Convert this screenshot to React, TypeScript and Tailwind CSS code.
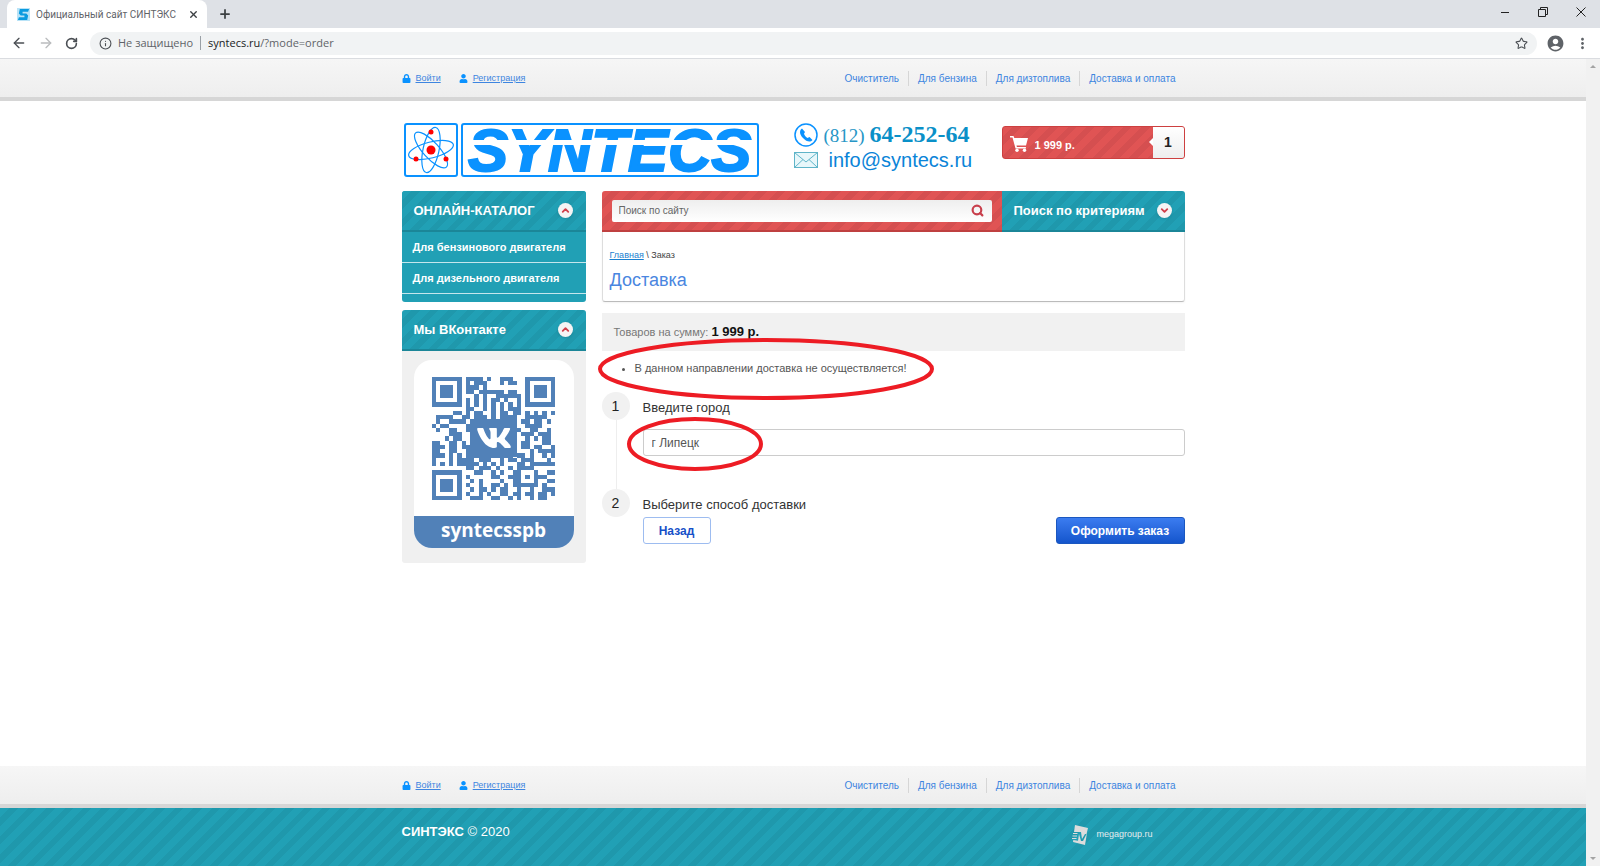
import { ArrowLeft, ArrowRight, ChevronDown, ChevronUp, Info, Plus, RotateCw, Search, Star, X } from 'lucide-react';
import { FaLock, FaShoppingCart, FaUser, FaVk } from 'react-icons/fa';
import { MdAccountCircle, MdMoreVert } from 'react-icons/md';

const tealStripes =
    'bg-[repeating-linear-gradient(135deg,#21a0b5_0px,#21a0b5_7px,#1f98ac_7px,#1f98ac_13px)]';
const redStripes =
    'bg-[repeating-linear-gradient(135deg,#e05454_0px,#e05454_7px,#d54f50_7px,#d54f50_13px)]';

const navLinks = ['Очиститель', 'Для бензина', 'Для дизтоплива', 'Доставка и оплата'];
const catalog = ['Для бензинового двигателя', 'Для дизельного двигателя'];

const qrRows = [
    '#######.####.#..###...#######',
    '#.....#.#.###...#.##..#.....#',
    '#.###.#.###.#.........#.###.#',
    '#.###.#.##.######.##..#.###.#',
    '#.###.#...#.#..######.#.###.#',
    '#.....#.#.#.#.##.#..#.#.....#',
    '#######.#.#.#.#.#.#.#.#######',
    '........##..#.#.#.###........',
    '.....##.#.##..#.##.##.#.#.#.#',
    '.####..##.###.#.####..#####..',
    '.#..####.###########.##.##.#.',
    '#.##....############..####...',
    '.#..##..#########.###..##..#.',
    '....###..###########.###.###.',
    '...#.##..###########..#.#.##.',
    '##..##.#.###########.##...##.',
    '###.##.####.########.##.##..#',
    '##..##..#..#########...#.####',
    '###.#.#.###########.##.#..#.#',
    '#...#.####.###..#.##.###...#.',
    '#.#.#.#####.#.#.#...##.######',
    '........##.###.#..#.####.....',
    '#######...##..#.#..##...#..##',
    '#.....#.#.....##..###.#.###..',
    '#.###.#..#.#....#..##...#..##',
    '#.###.#.#..#..##.#.######.#..',
    '#.###.#..#.##.#.##..#..#..###',
    '#.....#.#..#.#..##.##.##.##.#',
    '#######..###..##..#.#..#.##..',
];

function QrCode() {
    return (
        <svg viewBox="0 0 29 29" className="size-[123px]" shapeRendering="crispEdges" fill="#5181b8">
            {qrRows.map((row, y) =>
                row.split('').map((cell, x) => cell === '#' && (
                    <rect key={`${x}-${y}`} x={x} y={y} width="1" height="1" />
                ))
            )}
        </svg>
    );
}

function Browser() {
    return (
        <header className="font-['Open_Sans',sans-serif] text-[11px] text-[#5f6368]">
            <div className="flex h-7 items-center bg-[#dee1e6]">
                <div className="ml-[7px] flex h-full w-[200px] items-center rounded-t-lg bg-white pr-2 pl-[10px]">
                    <svg viewBox="0 0 14 14" className="size-[13px] shrink-0">
                        <rect width="14" height="14" fill="#b9e3f7" />
                        <path d="M3 1h10l-1 3H6v2h4l2 2-1 5H1l1-3h6V8H4L2 6z" fill="#0a9be0" />
                    </svg>
                    <span className="ml-[6px] flex-1 font-[Roboto,sans-serif] text-[10px] whitespace-nowrap">Официальный сайт СИНТЭКС</span>
                    <button aria-label="Закрыть вкладку"><X size={11} strokeWidth={3} className="text-[#3c4043]" /></button>
                </div>
                <button aria-label="Новая вкладка" className="ml-[11px]"><Plus size={14} strokeWidth={3} className="text-[#3c4043]" /></button>
                <div className="mr-[14px] mb-1 ml-auto flex items-center gap-7 text-[#222]">
                    <button aria-label="Свернуть">
                        <svg viewBox="0 0 10 10" className="size-[10px]"><path d="M1 5.500h8" stroke="currentColor" /></svg>
                    </button>
                    <button aria-label="Восстановить">
                        <svg viewBox="0 0 10 10" className="size-[10px]" fill="none" stroke="currentColor">
                            <path d="M.5 2.500h7v7h-7zM2.500 2.500v-2h7v7h-2" />
                        </svg>
                    </button>
                    <button aria-label="Закрыть">
                        <svg viewBox="0 0 10 10" className="size-[10px]"><path d="M.5.5l9 9M9.500.5l-9 9" stroke="currentColor" /></svg>
                    </button>
                </div>
            </div>
            <div className="flex h-[31px] items-center border-b border-[#dadce0] bg-white pl-[11px]">
                <button aria-label="Назад"><ArrowLeft size={16} className="text-[#4b4f54]" /></button>
                <button aria-label="Вперёд" className="ml-[11px]"><ArrowRight size={16} className="text-[#babcbe]" /></button>
                <button aria-label="Обновить" className="ml-[11px]"><RotateCw size={13} strokeWidth={3} className="text-[#4b4f54]" /></button>
                <div className="ml-3 flex h-[23px] flex-1 items-center rounded-full bg-[#f1f3f4] px-[9px]">
                    <Info size={13} className="text-[#4b4f54]" />
                    <span className="ml-[6px]">Не защищено</span>
                    <span className="mx-[7px] h-[14px] w-px bg-[#9aa0a6]" />
                    <span><span className="text-[#202124]">syntecs.ru</span>/?mode=order</span>
                    <button aria-label="В закладки" className="ml-auto"><Star size={13} className="text-[#4b4f54]" /></button>
                </div>
                <button aria-label="Профиль" className="ml-[9px]"><MdAccountCircle size={19} /></button>
                <button aria-label="Меню" className="mx-[9px]"><MdMoreVert size={17} /></button>
            </div>
        </header>
    );
}

function LinkBar() {
    return (
        <div className="border-b-4 border-[#d6d6d6] bg-linear-to-b from-[#f6f6f6] to-[#eeeeee]">
            <div className="mx-auto flex h-[38px] max-w-[783px] items-center pt-px leading-[15px] text-[#3d85e0]">
                <FaLock size={9} className="text-[#0a92ff]" />
                <a href="#login" className="ml-[5px] text-[9px] underline">Войти</a>
                <FaUser size={9} className="ml-[18px] text-[#0a92ff]" />
                <a href="#register" className="ml-[5px] text-[9px] underline">Регистрация</a>
                <nav className="ml-auto flex text-[10px]">
                    {navLinks.map((label, i) => (
                        <a key={label} href="#nav" className={i ? 'border-l border-[#d6d6d6] px-[9px]' : 'px-[9px]'}>
                            {label}
                        </a>
                    ))}
                </nav>
            </div>
        </div>
    );
}

function Logo() {
    return (
        <a href="#home" aria-label="SYNTECS" className="ml-[2px] flex gap-[3px]">
            <svg viewBox="0 0 54 54" className="size-[54px]" fill="none" stroke="#0a92ff">
                <rect x="1" y="1" width="52" height="52" rx="2" strokeWidth="2" />
                <ellipse cx="27" cy="27" rx="8" ry="23" strokeWidth="1.200" transform="rotate(12 27 27)" />
                <ellipse cx="27" cy="27" rx="8" ry="23" strokeWidth="1.200" transform="rotate(76 27 27)" />
                <ellipse cx="27" cy="27" rx="8" ry="23" strokeWidth="1.200" transform="rotate(-42 27 27)" />
                <g fill="#f00" stroke="none">
                    <circle cx="27" cy="27" r="4.500" />
                    <circle cx="27" cy="9" r="2.500" />
                    <circle cx="12" cy="36" r="2.500" />
                    <circle cx="42" cy="36" r="2.500" />
                </g>
            </svg>
            <svg viewBox="0 0 298 54" className="h-[54px] w-[298px] overflow-visible">
                <rect x="1" y="1" width="296" height="52" rx="2" fill="#fff" stroke="#0a92ff" strokeWidth="2" />
                <text x="7" y="48" fontFamily="Liberation Sans, sans-serif" fontSize="60" fontWeight="700" fontStyle="italic" fill="#0a92ff" stroke="#0a92ff" strokeWidth="2">
                    SYNTECS
                </text>
                <path d="M3 19.500h292" stroke="#fff" strokeWidth="5" />
            </svg>
        </a>
    );
}

function RoundArrow({ down = false }: { down?: boolean }) {
    const Icon = down ? ChevronDown : ChevronUp;
    return (
        <span className="flex size-[15px] items-center justify-center rounded-full bg-[#f4f4f4] shadow-sm">
            <Icon size={11} strokeWidth={4} className="text-[#cf3f4a]" />
        </span>
    );
}

function SideTitle({ children }: { children: string }) {
    return (
        <h2 className={`flex h-[41px] items-center justify-between rounded-t-[3px] border-b-2 border-[#1b8698] pr-[13px] pl-3 text-[13px] font-bold text-white ${tealStripes}`}>
            {children}
            <RoundArrow />
        </h2>
    );
}

function Sidebar() {
    return (
        <aside className="w-[184px] shrink-0">
            <section className="rounded-[3px] bg-[#21a0b5] pb-2">
                <SideTitle>ОНЛАЙН-КАТАЛОГ</SideTitle>
                {catalog.map((item) => (
                    <a key={item} href="#catalog" className="flex h-[31px] items-center border-b border-[#c5e6ec] px-[11px] text-[11px] font-bold text-white">
                        {item}
                    </a>
                ))}
            </section>
            <section className="mt-2 rounded-[3px] bg-[#f0f0f0] pb-[15px]">
                <SideTitle>Мы ВКонтакте</SideTitle>
                <div className="mx-3 mt-[9px] overflow-hidden rounded-[18px] bg-white">
                    <div className="relative flex h-[156px] items-center justify-center">
                        <QrCode />
                        <div className="absolute flex h-[38px] w-[47px] items-center justify-center bg-[#5181b8] text-white">
                            <FaVk size={36} />
                        </div>
                    </div>
                    <p className="h-8 bg-[#5181b8] text-center font-['Open_Sans',sans-serif] text-[19px] leading-7 font-bold text-white">
                        syntecsspb
                    </p>
                </div>
            </section>
        </aside>
    );
}

function Contacts() {
    return (
        <div className="mb-[6px] ml-[35px] text-[#0a84d8]">
            <div className="flex items-center gap-[6px]">
                <svg viewBox="0 0 24 24" className="size-6">
                    <circle cx="12" cy="12" r="11" fill="none" stroke="#0a92ff" strokeWidth="1.5" />
                    <path d="M8 5.500c-3 2-2.500 6 1 9.500s7 5 9.500 2l-3-3-2 1c-1.500-.8-3-2.500-3.500-4.200l1-1.800z" fill="#0a92ff" />
                </svg>
                <span className="font-['Liberation_Serif',serif] text-[19px] leading-6 text-[#2796c6]">
                    (812) <b className="text-[24px] text-[#0a90c8]">64-252-64</b>
                </span>
            </div>
            <div className="flex items-center gap-[11px]">
                <svg viewBox="0 0 24 16" className="h-4 w-6" fill="#e8f7fa" stroke="#5fb4c8">
                    <rect x=".5" y=".5" width="23" height="15" />
                    <path d="M.5.5L12 10 23.500.5M.5 15.500L9 7.500M23.500 15.500L15 7.500" fill="none" />
                </svg>
                <a href="#mail" className="text-[20px] leading-6">info@syntecs.ru</a>
            </div>
        </div>
    );
}

function Cart() {
    return (
        <a href="#cart" className={`relative mb-4 ml-auto flex h-[33px] w-[183px] items-center rounded-[3px] border border-[#cd4040] pl-[7px] text-white ${redStripes}`}>
            <svg viewBox="0 0 18 16" className="mt-1 h-4 w-[18px]" fill="currentColor">
                <path d="M0 0h3.500l.8 2H18l-2 7.500H6.500l.4 1.500h9v1.500H5.500L2.500 1.500H0z" />
                <circle cx="7" cy="14.300" r="1.700" />
                <circle cx="14.500" cy="14.300" r="1.700" />
            </svg>
            <span className="mt-[6px] ml-[7px] text-[11px] font-bold">1 999 р.</span>
            <span className="ml-auto flex h-full w-[31px] items-center justify-center rounded-r-[2px] bg-linear-to-b from-white to-[#eeeeee] text-[14px] font-bold text-[#222]">
                1
            </span>
            <span className="absolute right-[31px] border-y-4 border-r-4 border-transparent border-r-white" />
        </a>
    );
}

function Step({ num, title, children }: { num: number; title: string; children: React.ReactNode }) {
    return (
        <section className="flex">
            <div className="flex w-[41px] shrink-0 flex-col">
                <span className="flex size-7 items-center justify-center rounded-full bg-[#f1f1f1] text-[14px] text-[#222]">{num}</span>
                {num === 1 && <span className="ml-[14px] w-px flex-1 bg-[#eeeeee]" />}
            </div>
            <div className="flex-1">
                <h3 className="mt-1 text-[13px] leading-6 text-[#333]">{title}</h3>
                {children}
            </div>
        </section>
    );
}

function Order() {
    return (
        <main className="ml-4 flex-1">
            <div className="flex h-[41px]">
                <form className={`flex flex-1 items-center rounded-tl-[3px] border-b-2 border-[#bf4040] px-[10px] ${redStripes}`}>
                    <div className="flex h-[22px] w-full items-center rounded-[2px] bg-linear-to-b from-[#eeeeee] to-white pr-2">
                        <input aria-label="Поиск по сайту" placeholder="Поиск по сайту" className="flex-1 px-[7px] text-[10px] outline-none placeholder:text-[#666]" />
                        <button aria-label="Найти"><Search size={13} strokeWidth={4} className="text-[#c83f4c]" /></button>
                    </div>
                </form>
                <button className={`flex w-[183px] items-center justify-between rounded-tr-[3px] border-b-2 border-[#1b8698] pr-[13px] pl-3 text-[13px] font-bold text-white ${tealStripes}`}>
                    Поиск по критериям
                    <RoundArrow down />
                </button>
            </div>
            <div className="h-[70px] rounded-b-[3px] border border-t-0 border-[#dddddd] border-b-[#bbbbbb] pt-4 pl-[7px] shadow-xs">
                <p className="text-[9px] leading-[14px] text-[#444]">
                    <a href="#home" className="text-[#1a7fd0] underline">Главная</a> \ Заказ
                </p>
                <h1 className="mt-[6px] text-[18px] leading-6 text-[#4a86e0]">Доставка</h1>
            </div>

            <div className="mt-[11px] h-[38px] bg-[#f1f1f1] pl-3 text-[11px] leading-[38px] text-[#777]">
                Товаров на сумму: <b className="text-[13px] text-[#111]">1 999 р.</b>
            </div>
            <div className="relative flex h-[41px] pt-2">
                <ul className="list-disc pl-[33px] text-[11px] leading-[18px] text-[#555]">
                    <li>В данном направлении доставка не осуществляется!</li>
                </ul>
                <svg viewBox="0 0 338 64" className="absolute -top-[14px] -left-[5px] h-16 w-[338px]">
                    <ellipse cx="169" cy="32" rx="166" ry="29" fill="none" stroke="#ed1c24" strokeWidth="4" />
                </svg>
            </div>

            <Step num={1} title="Введите город">
                <div className="relative mt-[9px] mb-[33px]">
                    <input
                        aria-label="Город"
                        defaultValue="г Липецк"
                        className="block h-[27px] w-full rounded-[3px] border border-[#cccccc] px-2 text-[12px] text-[#555] outline-none"
                    />
                    <svg viewBox="0 0 138 56" className="absolute -top-[13px] -left-[17px] h-14 w-[138px]">
                        <ellipse cx="69" cy="28" rx="66" ry="25" fill="none" stroke="#ed1c24" strokeWidth="4" />
                    </svg>
                </div>
            </Step>
            <Step num={2} title="Выберите способ доставки">
                <div className="flex justify-between text-[12px] font-bold">
                    <button className="h-[27px] w-[68px] rounded-[3px] border border-[#9dbcf0] text-[#1650c8]">Назад</button>
                    <button className="h-[27px] w-[129px] rounded-[3px] border border-[#1b57c0] bg-linear-to-b from-[#3b7cf0] to-[#1455cc] text-white">
                        Оформить заказ
                    </button>
                </div>
            </Step>
        </main>
    );
}

function Footer() {
    return (
        <footer className="mt-auto">
            <LinkBar />
            <div className={`h-[58px] ${tealStripes}`}>
                <div className="mx-auto flex max-w-[783px] items-start justify-between pt-[14px] text-white">
                    <p className="text-[13px] leading-5"><b>СИНТЭКС</b> © 2020</p>
                    <a href="#megagroup" className="mt-[3px] mr-8 flex items-center gap-2 text-[9px] text-[#e3ecee]">
                        <svg viewBox="0 0 16 20" className="h-5 w-4">
                            <path d="M3 0l13 3-1.500 6H13l-3 5-1-7H2z" fill="#dcdcdc" />
                            <path d="M15 8l-2 12-12-3 .3-2 4.700.8L7 9l2 7h2z" fill="#dcdcdc" />
                            <path d="M1 8.500h4.500M.5 11h4.500M0 13.500h4.500" stroke="#dcdcdc" />
                        </svg>
                        megagroup.ru
                    </a>
                </div>
            </div>
        </footer>
    );
}

export default function App() {
    return (
        <div className="flex min-h-screen flex-col bg-white font-['Liberation_Sans',sans-serif]">
            <Browser />
            <div className="flex flex-1">
                <div className="flex flex-1 flex-col">
                    <LinkBar />
                    <div className="mx-auto w-full max-w-[783px] pb-10">
                        <div className="flex h-[90px] items-center pt-2">
                            <Logo />
                            <Contacts />
                            <Cart />
                        </div>
                        <div className="flex items-start">
                            <Sidebar />
                            <Order />
                        </div>
                    </div>
                    <Footer />
                </div>
                <div className="flex w-[14px] flex-col items-center justify-between bg-[#f1f1f1] py-[6px]">
                    <span className="border-x-3 border-b-3 border-transparent border-b-[#a3a3a3]" />
                    <span className="border-x-3 border-t-3 border-transparent border-t-[#a3a3a3]" />
                </div>
            </div>
        </div>
    );
}
